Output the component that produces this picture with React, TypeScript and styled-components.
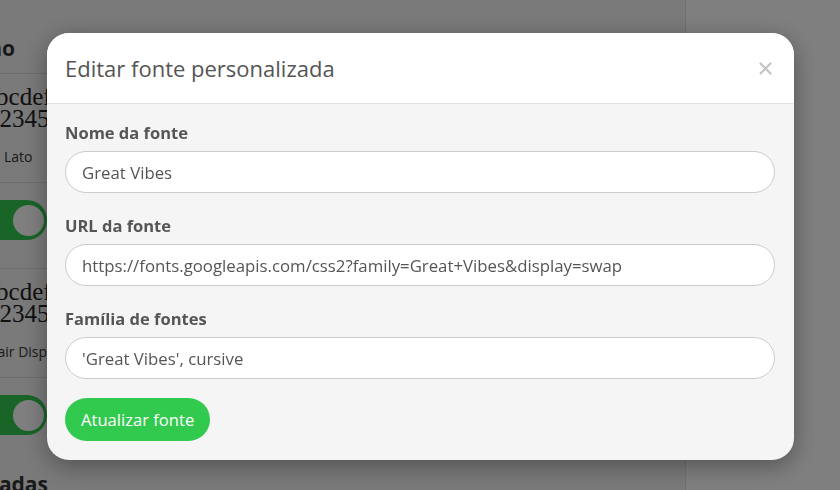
import React from "react";
import styled, { createGlobalStyle } from "styled-components";

const GlobalStyle = createGlobalStyle`
  html, body {
    margin: 0;
    padding: 0;
    height: 100%;
  }
  body {
    font-family: "Open Sans", "Noto Sans", sans-serif;
    color: #555;
    overflow: hidden;
  }
  #root {
    height: 100%;
  }
`;

const Page = styled.div`
  display: grid;
  grid-template-columns: 686px 1fr;
  height: 490px;
  overflow: hidden;
`;

const SettingsPanel = styled.div`
  background: #f5f5f5;
  border-right: 1px solid #e2e2e2;
  overflow: hidden;
`;

const SidePanel = styled.div`
  background: #ffffff;
`;

const PanelInner = styled.div`
  margin-left: -60px;
  padding-top: 33px;
  display: flex;
  flex-direction: column;
`;

/* the heading sits mostly under the modal: only its end shows, so it is right-aligned to $end */
const SectionTitle = styled.h2<{ $end: number; $top?: number }>`
  margin: ${(p) => p.$top ?? 0}px 0 0;
  width: ${(p) => p.$end}px;
  display: flex;
  justify-content: flex-end;
  font-size: 21px;
  line-height: 30px;
  font-weight: 700;
  color: #333;
  white-space: nowrap;
`;

const FontCard = styled.div`
  margin-top: 10px;
  border-top: 1px solid #dcdcdc;
  border-bottom: 1px solid #dcdcdc;
  height: 110px;
  width: 240px;
  display: flex;
  flex-direction: column;
  padding-top: 12px;
  box-sizing: border-box;
`;

const Sample = styled.div<{ $offset: number }>`
  margin-left: ${(p) => p.$offset}px;
  font-family: "Liberation Serif", "DejaVu Serif", serif;
  font-size: 25px;
  line-height: 22px;
  color: #222;
`;

const FontName = styled.div<{ $offset: number }>`
  margin: 17px 0 0 ${(p) => p.$offset}px;
  font-size: 14px;
  color: #333;
  white-space: nowrap;
`;

const Toggle = styled.div`
  margin: 17px 0 18px 27px;
  width: 80px;
  height: 40px;
  border-radius: 20px;
  background: #32c94f;
  display: flex;
  align-items: center;
  justify-content: flex-end;
  padding-right: 3px;
  box-sizing: border-box;
`;

const Knob = styled.div`
  width: 31px;
  height: 31px;
  border-radius: 50%;
  background: #fff;
`;

const Overlay = styled.div`
  position: fixed;
  inset: 0;
  background: rgba(0, 0, 0, 0.5);
  display: flex;
  align-items: flex-start;
  padding: 33px 0 0 47px;
`;

const Modal = styled.div`
  width: 747px;
  border-radius: 22px;
  overflow: hidden;
  background: #f5f5f5;
  box-shadow: 0 6px 24px rgba(0, 0, 0, 0.35);
`;

const ModalHeader = styled.div`
  height: 70px;
  background: #fff;
  border-bottom: 1px solid #e3e3e3;
  display: flex;
  align-items: center;
  justify-content: space-between;
  padding: 0 20px 0 18px;
`;

const ModalTitle = styled.h3`
  margin: 0;
  font-size: 22px;
  font-weight: 400;
  color: #555;
`;

const CloseButton = styled.button`
  border: none;
  background: none;
  padding: 0;
  width: 18px;
  height: 18px;
  cursor: pointer;
  display: flex;
  align-items: center;
  justify-content: center;
`;

const ModalBody = styled.form`
  padding: 17px 18px 19px;
  display: flex;
  flex-direction: column;
  align-items: flex-start;
`;

const Field = styled.div`
  width: 100%;
  display: flex;
  flex-direction: column;
  margin-bottom: 21px;

  &:last-of-type {
    margin-bottom: 19px;
  }
`;

const Label = styled.label`
  font-size: 16.5px;
  line-height: 23px;
  font-weight: 700;
  color: #555;
  margin-bottom: 7px;
`;

const Input = styled.input`
  box-sizing: border-box;
  width: 710px;
  height: 42px;
  border: 1px solid #cbcbcb;
  border-radius: 21px;
  background: #fff;
  padding: 0 16px;
  font-family: inherit;
  font-size: 16.8px;
  color: #555;
  outline: none;
`;

const SubmitButton = styled.button`
  height: 43px;
  padding: 0 16px;
  border: none;
  border-radius: 22px;
  background: #32c94f;
  color: #fff;
  font-family: inherit;
  font-size: 16.6px;
  cursor: pointer;
`;

const CloseIcon = () => (
  <svg width="13" height="13" viewBox="0 0 13 13">
    <path d="M1.5 1.5 L11.5 11.5 M11.5 1.5 L1.5 11.5" stroke="#c4c4c4" strokeWidth="2.2" strokeLinecap="round" />
  </svg>
);

const fields = [
  { id: "name", label: "Nome da fonte", value: "Great Vibes" },
  { id: "url", label: "URL da fonte", value: "https://fonts.googleapis.com/css2?family=Great+Vibes&display=swap" },
  { id: "family", label: "Família de fontes", value: "'Great Vibes', cursive" },
];

const App = () => {
  return (
    <>
      <GlobalStyle />
      <Page>
        <SettingsPanel>
          <PanelInner>
            <SectionTitle $end={75}>Fontes do sistema interno</SectionTitle>
            <FontCard>
              <Sample $offset={45}>abcdef</Sample>
              <Sample $offset={47}>12345</Sample>
              <FontName $offset={64}>Lato</FontName>
            </FontCard>
            <Toggle>
              <Knob />
            </Toggle>
            <FontCard>
              <Sample $offset={45}>abcdef</Sample>
              <Sample $offset={47}>12345</Sample>
              <FontName $offset={26}>Playfair Display</FontName>
            </FontCard>
            <Toggle>
              <Knob />
            </Toggle>
            <SectionTitle $end={108} $top={16}>Fontes salvadas</SectionTitle>
          </PanelInner>
        </SettingsPanel>
        <SidePanel />
      </Page>
      <Overlay>
        <Modal>
          <ModalHeader>
            <ModalTitle>Editar fonte personalizada</ModalTitle>
            <CloseButton type="button" aria-label="Fechar">
              <CloseIcon />
            </CloseButton>
          </ModalHeader>
          <ModalBody onSubmit={(e) => e.preventDefault()}>
            {fields.map((f) => (
              <Field key={f.id}>
                <Label htmlFor={f.id}>{f.label}</Label>
                <Input id={f.id} defaultValue={f.value} />
              </Field>
            ))}
            <SubmitButton type="submit">Atualizar fonte</SubmitButton>
          </ModalBody>
        </Modal>
      </Overlay>
    </>
  );
};

export default App;
